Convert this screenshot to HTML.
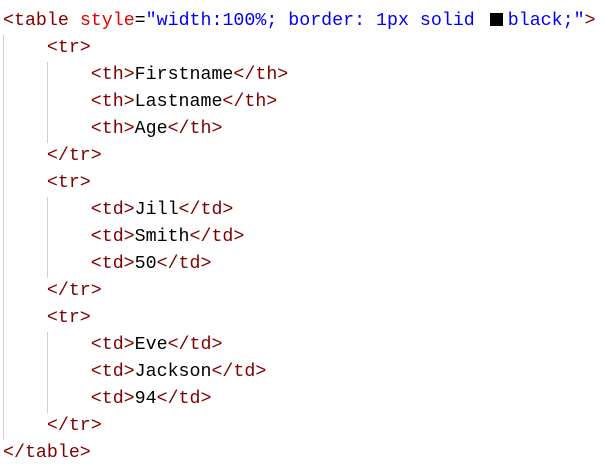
<!DOCTYPE html>
<html><head><style>
body{margin:0;background:#fff;width:604px;height:465px;overflow:hidden;position:relative}
.c{position:absolute;left:3px;top:8px;font:18.3px/27px "Liberation Mono",monospace;white-space:pre;color:#000}
.t{color:#800000}.a{color:#e50000}.v{color:#0000ff}
.g{position:absolute;width:1px;background:#d0d0d0}
.box{display:inline-block;width:13px;height:13px;background:#000;margin:0 5px 0 4px;vertical-align:-1px}
</style></head><body>
<div class="g" style="left:3px;top:35px;height:405px"></div>
<div class="g" style="left:47px;top:62px;height:81px"></div>
<div class="g" style="left:47px;top:197px;height:81px"></div>
<div class="g" style="left:47px;top:332px;height:81px"></div>
<div class="c"><span class="t">&lt;table</span> <span class="a">style</span>=<span class="v">"width:100%; border: 1px solid <span class="box"></span>black;"</span><span class="t">&gt;</span>
    <span class="t">&lt;tr&gt;</span>
        <span class="t">&lt;th&gt;</span>Firstname<span class="t">&lt;/th&gt;</span>
        <span class="t">&lt;th&gt;</span>Lastname<span class="t">&lt;/th&gt;</span>
        <span class="t">&lt;th&gt;</span>Age<span class="t">&lt;/th&gt;</span>
    <span class="t">&lt;/tr&gt;</span>
    <span class="t">&lt;tr&gt;</span>
        <span class="t">&lt;td&gt;</span>Jill<span class="t">&lt;/td&gt;</span>
        <span class="t">&lt;td&gt;</span>Smith<span class="t">&lt;/td&gt;</span>
        <span class="t">&lt;td&gt;</span>50<span class="t">&lt;/td&gt;</span>
    <span class="t">&lt;/tr&gt;</span>
    <span class="t">&lt;tr&gt;</span>
        <span class="t">&lt;td&gt;</span>Eve<span class="t">&lt;/td&gt;</span>
        <span class="t">&lt;td&gt;</span>Jackson<span class="t">&lt;/td&gt;</span>
        <span class="t">&lt;td&gt;</span>94<span class="t">&lt;/td&gt;</span>
    <span class="t">&lt;/tr&gt;</span>
<span class="t">&lt;/table&gt;</span></div>
</body></html>
